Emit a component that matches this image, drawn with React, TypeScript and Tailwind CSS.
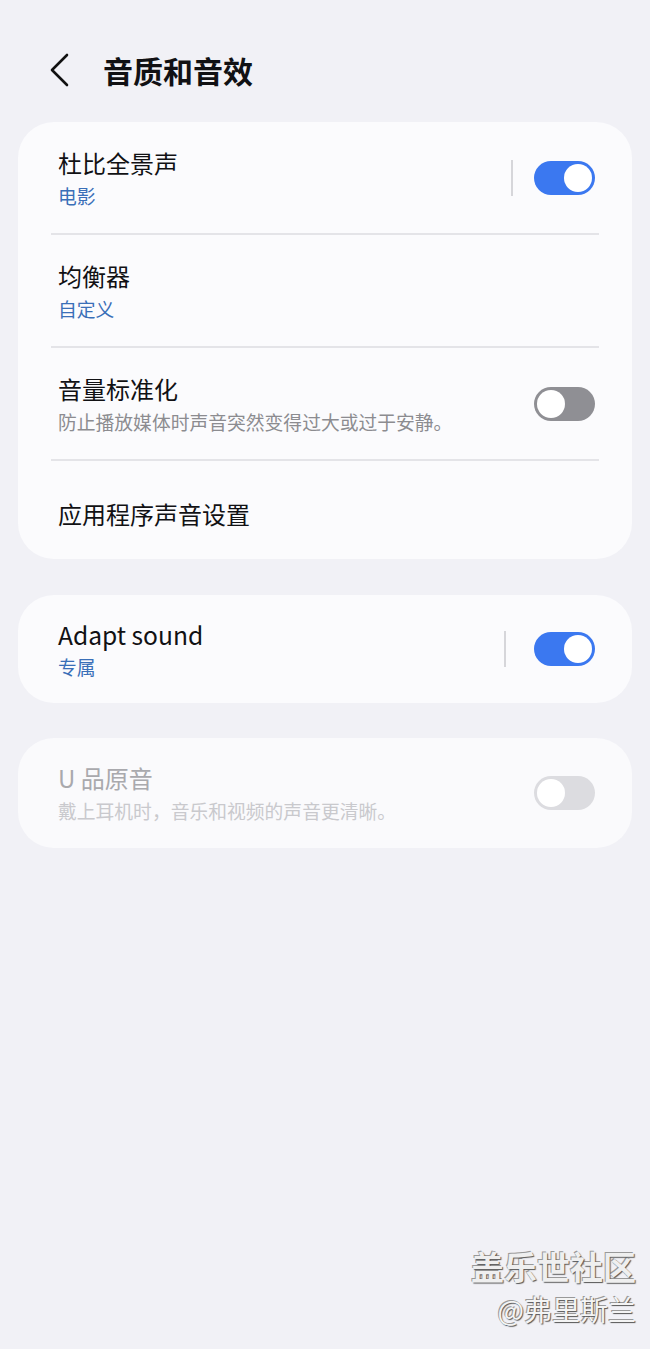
import React from "react";

const FONT = "font-['Noto_Sans_CJK_SC','Noto_Sans',sans-serif]";

function Toggle({ on, disabled }: { on: boolean; disabled?: boolean }) {
  if (on) {
    return (
      <div className="w-[61px] h-[34px] rounded-full bg-[#3b78f0] flex items-center justify-end px-[3px]">
        <div className="w-[28px] h-[28px] rounded-full bg-white" />
      </div>
    );
  }
  const track = disabled ? "bg-[#dcdce0]" : "bg-[#8f8f94]";
  return (
    <div className={`w-[61px] h-[34px] rounded-full ${track} flex items-center justify-start px-[3px]`}>
      <div className="w-[28px] h-[28px] rounded-full bg-white" />
    </div>
  );
}

function Row({
  title,
  sub,
  subColor,
  titleColor = "text-[#111114]",
  titleSize = "text-[24px]",
  toggle,
  height,
  divider,
}: {
  title: string;
  sub?: string;
  subColor?: string;
  titleColor?: string;
  titleSize?: string;
  toggle?: React.ReactNode;
  height: string;
  divider?: string;
}) {
  return (
    <div className={`flex items-center pl-[40px] pr-[37px] ${height}`}>
      <div className="flex flex-col flex-1 min-w-0">
        <div className={`${titleSize} leading-[32px] ${titleColor}`}>{title}</div>
        {sub && <div className={`text-[18.8px] leading-[26px] mt-[4px] ${subColor}`}>{sub}</div>}
      </div>
      {divider && <div className={`w-[2px] h-[36px] bg-[#d6d6da] ${divider}`} />}
      {toggle}
    </div>
  );
}

function Sep() {
  return <div className="h-[2px] bg-[#e4e4e8] mx-[33px]" />;
}

export default function App() {
  return (
    <div className={`relative w-[650px] h-[1349px] bg-[#f1f1f6] ${FONT} overflow-hidden`}>
      <div className="h-[60px] mt-[40px] flex items-center">
        <svg width="24" height="34" viewBox="0 0 24 34" className="ml-[47px]">
          <path d="M20 2 L5 17 L20 32" fill="none" stroke="#111" strokeWidth="2.6" strokeLinecap="round" strokeLinejoin="round" />
        </svg>
        <div className="ml-[32px] text-[30px] leading-[40px] font-bold text-[#111114]">音质和音效</div>
      </div>

      <div className="mx-[18px] mt-[22px] rounded-[36px] bg-[#fbfbfd]">
        <Row
          height="h-[111px]"
          title="杜比全景声"
          sub="电影"
          subColor="text-[#3a6fb8]"
          divider="mr-[21px]"
          toggle={<Toggle on />}
        />
        <Sep />
        <Row height="h-[111px]" title="均衡器" sub="自定义" subColor="text-[#3a6fb8]" />
        <Sep />
        <Row
          height="h-[111px]"
          title="音量标准化"
          sub="防止播放媒体时声音突然变得过大或过于安静。"
          subColor="text-[#8c8c90]"
          toggle={<Toggle on={false} />}
        />
        <Sep />
        <div className="h-[98px] pl-[40px] pt-[37px]">
          <div className="text-[24px] leading-[32px] text-[#111114]">应用程序声音设置</div>
        </div>
      </div>

      <div className="mx-[18px] mt-[36px] rounded-[36px] bg-[#fbfbfd]">
        <Row
          height="h-[108px]"
          title="Adapt sound"
          titleSize="text-[24.6px]"
          sub="专属"
          subColor="text-[#3a6fb8]"
          divider="mr-[28px]"
          toggle={<Toggle on />}
        />
      </div>

      <div className="mx-[18px] mt-[35px] rounded-[36px] bg-[#fafafc]">
        <Row
          height="h-[110px]"
          title="U 品原音"
          titleColor="text-[#a9a9ad]"
          sub="戴上耳机时，音乐和视频的声音更清晰。"
          subColor="text-[#c9c9cd]"
          toggle={<Toggle on={false} disabled />}
        />
      </div>

      <div className="absolute right-[14px] top-[1244px] flex flex-col items-end">
        <div className="text-[33px] leading-[44px] font-bold text-[#efefef] [text-shadow:1px_1px_1px_#555,-1px_-1px_0_#999]">
          盖乐世社区
        </div>
        <div className="text-[28px] leading-[38px] text-[#f4f4f4] [text-shadow:1px_1px_1px_#555,-1px_-1px_0_#999] mt-[2px]">
          @弗里斯兰
        </div>
      </div>
    </div>
  );
}
